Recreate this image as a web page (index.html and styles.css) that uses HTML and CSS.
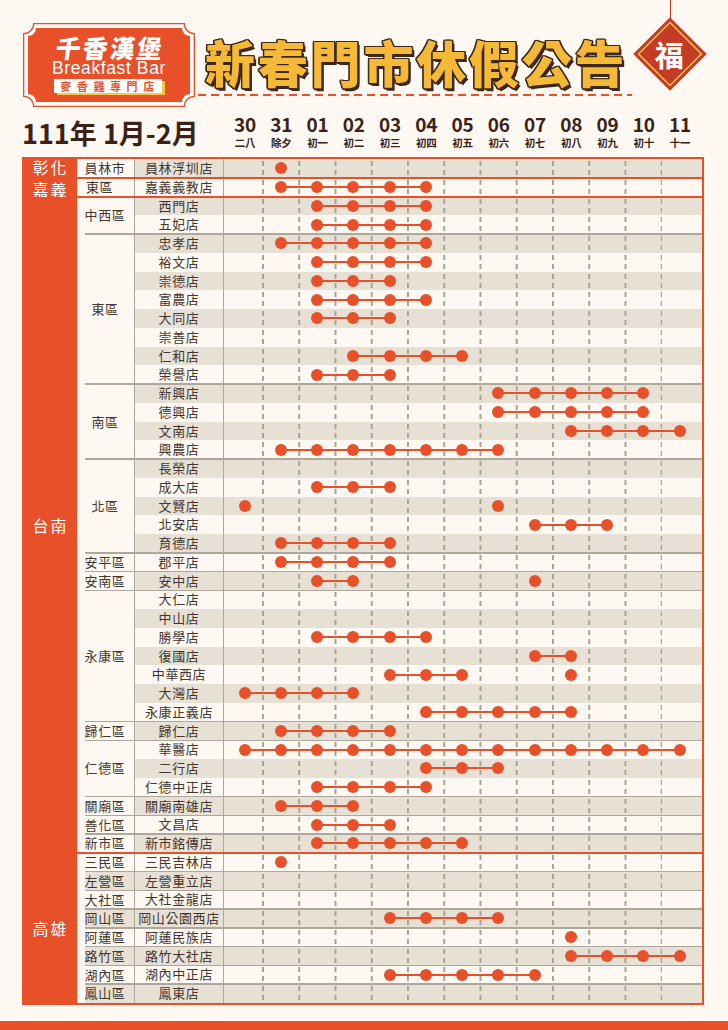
FILE: index.html
```html
<!DOCTYPE html>
<html lang="zh-Hant">
<head>
<meta charset="utf-8">
<title>千香漢堡 新春門市休假公告</title>
<link rel="stylesheet" href="styles.css">
</head>
<body>
<div class="page">
  <div class="fu-string"></div>
  <div class="fu"><span>福</span></div>

  <header class="header">
    <div class="logo">
      <svg class="logo-bg" viewBox="0 0 172 84" width="172" height="84" aria-hidden="true">
        <path d="M10.65,0.65 H161.35 A10 10 0 0 0 171.35,10.65 V73.35 A10 10 0 0 0 161.35,83.35 H10.65 A10 10 0 0 0 0.65,73.35 V10.65 A10 10 0 0 0 10.65,0.65 Z" fill="#fffaf4" stroke="#e8502a" stroke-width="1.3"/>
        <path d="M13,5 H159 A8 8 0 0 0 167,13 V71 A8 8 0 0 0 159,79 H13 A8 8 0 0 0 5,71 V13 A8 8 0 0 0 13,5 Z" fill="#e8502a"/>
      </svg>
      <div class="logo-cn">千香漢堡</div>
      <div class="logo-en">Breakfast Bar</div>
      <div class="logo-bar">麥香雞專門店</div>
    </div>
    <div class="title-wrap">
      <h1 class="title">新春門市休假公告</h1>
      <div class="title-dash"></div>
    </div>
  </header>

  <div class="dhead">
    <div class="period">111年 1月-2月</div>
    <div class="dcol"><b>30</b><small>二八</small></div>
    <div class="dcol"><b>31</b><small>除夕</small></div>
    <div class="dcol"><b>01</b><small>初一</small></div>
    <div class="dcol"><b>02</b><small>初二</small></div>
    <div class="dcol"><b>03</b><small>初三</small></div>
    <div class="dcol"><b>04</b><small>初四</small></div>
    <div class="dcol"><b>05</b><small>初五</small></div>
    <div class="dcol"><b>06</b><small>初六</small></div>
    <div class="dcol"><b>07</b><small>初七</small></div>
    <div class="dcol"><b>08</b><small>初八</small></div>
    <div class="dcol"><b>09</b><small>初九</small></div>
    <div class="dcol"><b>10</b><small>初十</small></div>
    <div class="dcol"><b>11</b><small>十一</small></div>
  </div>

  <div class="table">
    <!-- 彰化 嘉義 -->
    <section class="region">
      <div class="rlabel"><span class="two">彰化<br>嘉義</span></div>
      <div class="districts">
        <div class="dgroup">
          <div class="dlabel">員林市</div>
          <div class="rows">
            <div class="row b"><div class="store">員林浮圳店</div><div class="dates"><i class="d c2"></i></div></div>
          </div>
        </div>
        <div class="dgroup red">
          <div class="dlabel left">東區</div>
          <div class="rows">
            <div class="row"><div class="store">嘉義義教店</div><div class="dates"><i class="seg" style="grid-column:2/7"></i><i class="d c2"></i><i class="d c3"></i><i class="d c4"></i><i class="d c5"></i><i class="d c6"></i></div></div>
          </div>
        </div>
      </div>
    </section>

    <!-- 台南 -->
    <section class="region red-top">
      <div class="rlabel"><span>台南</span></div>
      <div class="districts">
        <div class="dgroup">
          <div class="dlabel">中西區</div>
          <div class="rows">
            <div class="row b"><div class="store">西門店</div><div class="dates"><i class="seg" style="grid-column:3/7"></i><i class="d c3"></i><i class="d c4"></i><i class="d c5"></i><i class="d c6"></i></div></div>
            <div class="row"><div class="store">五妃店</div><div class="dates"><i class="seg" style="grid-column:3/7"></i><i class="d c3"></i><i class="d c4"></i><i class="d c5"></i><i class="d c6"></i></div></div>
          </div>
        </div>
        <div class="dgroup sep">
          <div class="dlabel">東區</div>
          <div class="rows">
            <div class="row b"><div class="store">忠孝店</div><div class="dates"><i class="seg" style="grid-column:2/7"></i><i class="d c2"></i><i class="d c3"></i><i class="d c4"></i><i class="d c5"></i><i class="d c6"></i></div></div>
            <div class="row"><div class="store">裕文店</div><div class="dates"><i class="seg" style="grid-column:3/7"></i><i class="d c3"></i><i class="d c4"></i><i class="d c5"></i><i class="d c6"></i></div></div>
            <div class="row b"><div class="store">崇德店</div><div class="dates"><i class="seg" style="grid-column:3/6"></i><i class="d c3"></i><i class="d c4"></i><i class="d c5"></i></div></div>
            <div class="row"><div class="store">富農店</div><div class="dates"><i class="seg" style="grid-column:3/7"></i><i class="d c3"></i><i class="d c4"></i><i class="d c5"></i><i class="d c6"></i></div></div>
            <div class="row b"><div class="store">大同店</div><div class="dates"><i class="seg" style="grid-column:3/6"></i><i class="d c3"></i><i class="d c4"></i><i class="d c5"></i></div></div>
            <div class="row"><div class="store">崇善店</div><div class="dates"></div></div>
            <div class="row b"><div class="store">仁和店</div><div class="dates"><i class="seg" style="grid-column:4/8"></i><i class="d c4"></i><i class="d c5"></i><i class="d c6"></i><i class="d c7"></i></div></div>
            <div class="row"><div class="store">榮譽店</div><div class="dates"><i class="seg" style="grid-column:3/6"></i><i class="d c3"></i><i class="d c4"></i><i class="d c5"></i></div></div>
          </div>
        </div>
        <div class="dgroup sep">
          <div class="dlabel">南區</div>
          <div class="rows">
            <div class="row b"><div class="store">新興店</div><div class="dates"><i class="seg" style="grid-column:8/13"></i><i class="d c8"></i><i class="d c9"></i><i class="d c10"></i><i class="d c11"></i><i class="d c12"></i></div></div>
            <div class="row"><div class="store">德興店</div><div class="dates"><i class="seg" style="grid-column:8/13"></i><i class="d c8"></i><i class="d c9"></i><i class="d c10"></i><i class="d c11"></i><i class="d c12"></i></div></div>
            <div class="row b"><div class="store">文南店</div><div class="dates"><i class="seg" style="grid-column:10/14"></i><i class="d c10"></i><i class="d c11"></i><i class="d c12"></i><i class="d c13"></i></div></div>
            <div class="row"><div class="store">興農店</div><div class="dates"><i class="seg" style="grid-column:2/9"></i><i class="d c2"></i><i class="d c3"></i><i class="d c4"></i><i class="d c5"></i><i class="d c6"></i><i class="d c7"></i><i class="d c8"></i></div></div>
          </div>
        </div>
        <div class="dgroup sep">
          <div class="dlabel">北區</div>
          <div class="rows">
            <div class="row b"><div class="store">長榮店</div><div class="dates"></div></div>
            <div class="row"><div class="store">成大店</div><div class="dates"><i class="seg" style="grid-column:3/6"></i><i class="d c3"></i><i class="d c4"></i><i class="d c5"></i></div></div>
            <div class="row b"><div class="store">文賢店</div><div class="dates"><i class="d c1"></i><i class="d c8"></i></div></div>
            <div class="row"><div class="store">北安店</div><div class="dates"><i class="seg" style="grid-column:9/12"></i><i class="d c9"></i><i class="d c10"></i><i class="d c11"></i></div></div>
            <div class="row b"><div class="store">育德店</div><div class="dates"><i class="seg" style="grid-column:2/6"></i><i class="d c2"></i><i class="d c3"></i><i class="d c4"></i><i class="d c5"></i></div></div>
          </div>
        </div>
        <div class="dgroup sep">
          <div class="dlabel">安平區</div>
          <div class="rows">
            <div class="row"><div class="store">郡平店</div><div class="dates"><i class="seg" style="grid-column:2/6"></i><i class="d c2"></i><i class="d c3"></i><i class="d c4"></i><i class="d c5"></i></div></div>
          </div>
        </div>
        <div class="dgroup sep">
          <div class="dlabel">安南區</div>
          <div class="rows">
            <div class="row b"><div class="store">安中店</div><div class="dates"><i class="seg" style="grid-column:3/5"></i><i class="d c3"></i><i class="d c4"></i><i class="d c9"></i></div></div>
          </div>
        </div>
        <div class="dgroup sep">
          <div class="dlabel">永康區</div>
          <div class="rows">
            <div class="row"><div class="store">大仁店</div><div class="dates"></div></div>
            <div class="row b"><div class="store">中山店</div><div class="dates"></div></div>
            <div class="row"><div class="store">勝學店</div><div class="dates"><i class="seg" style="grid-column:3/7"></i><i class="d c3"></i><i class="d c4"></i><i class="d c5"></i><i class="d c6"></i></div></div>
            <div class="row b"><div class="store">復國店</div><div class="dates"><i class="seg" style="grid-column:9/11"></i><i class="d c9"></i><i class="d c10"></i></div></div>
            <div class="row"><div class="store">中華西店</div><div class="dates"><i class="seg" style="grid-column:5/8"></i><i class="d c5"></i><i class="d c6"></i><i class="d c7"></i><i class="d c10"></i></div></div>
            <div class="row b"><div class="store">大灣店</div><div class="dates"><i class="seg" style="grid-column:1/5"></i><i class="d c1"></i><i class="d c2"></i><i class="d c3"></i><i class="d c4"></i></div></div>
            <div class="row"><div class="store">永康正義店</div><div class="dates"><i class="seg" style="grid-column:6/11"></i><i class="d c6"></i><i class="d c7"></i><i class="d c8"></i><i class="d c9"></i><i class="d c10"></i></div></div>
          </div>
        </div>
        <div class="dgroup sep">
          <div class="dlabel">歸仁區</div>
          <div class="rows">
            <div class="row b"><div class="store">歸仁店</div><div class="dates"><i class="seg" style="grid-column:2/6"></i><i class="d c2"></i><i class="d c3"></i><i class="d c4"></i><i class="d c5"></i></div></div>
          </div>
        </div>
        <div class="dgroup sep">
          <div class="dlabel">仁德區</div>
          <div class="rows">
            <div class="row"><div class="store">華醫店</div><div class="dates"><i class="seg" style="grid-column:1/14"></i><i class="d c1"></i><i class="d c2"></i><i class="d c3"></i><i class="d c4"></i><i class="d c5"></i><i class="d c6"></i><i class="d c7"></i><i class="d c8"></i><i class="d c9"></i><i class="d c10"></i><i class="d c11"></i><i class="d c12"></i><i class="d c13"></i></div></div>
            <div class="row b"><div class="store">二行店</div><div class="dates"><i class="seg" style="grid-column:6/9"></i><i class="d c6"></i><i class="d c7"></i><i class="d c8"></i></div></div>
            <div class="row"><div class="store">仁德中正店</div><div class="dates"><i class="seg" style="grid-column:3/7"></i><i class="d c3"></i><i class="d c4"></i><i class="d c5"></i><i class="d c6"></i></div></div>
          </div>
        </div>
        <div class="dgroup sep">
          <div class="dlabel">關廟區</div>
          <div class="rows">
            <div class="row b"><div class="store">關廟南雄店</div><div class="dates"><i class="seg" style="grid-column:2/5"></i><i class="d c2"></i><i class="d c3"></i><i class="d c4"></i></div></div>
          </div>
        </div>
        <div class="dgroup sep">
          <div class="dlabel">善化區</div>
          <div class="rows">
            <div class="row"><div class="store">文昌店</div><div class="dates"><i class="seg" style="grid-column:3/6"></i><i class="d c3"></i><i class="d c4"></i><i class="d c5"></i></div></div>
          </div>
        </div>
        <div class="dgroup sep">
          <div class="dlabel">新市區</div>
          <div class="rows">
            <div class="row b"><div class="store">新市銘傳店</div><div class="dates"><i class="seg" style="grid-column:3/8"></i><i class="d c3"></i><i class="d c4"></i><i class="d c5"></i><i class="d c6"></i><i class="d c7"></i></div></div>
          </div>
        </div>
      </div>
    </section>

    <!-- 高雄 -->
    <section class="region red-top">
      <div class="rlabel"><span>高雄</span></div>
      <div class="districts">
        <div class="dgroup">
          <div class="dlabel">三民區</div>
          <div class="rows">
            <div class="row"><div class="store">三民吉林店</div><div class="dates"><i class="d c2"></i></div></div>
          </div>
        </div>
        <div class="dgroup sep">
          <div class="dlabel b">左營區</div>
          <div class="rows">
            <div class="row b"><div class="store">左營重立店</div><div class="dates"></div></div>
          </div>
        </div>
        <div class="dgroup sep">
          <div class="dlabel">大社區</div>
          <div class="rows">
            <div class="row"><div class="store">大社金龍店</div><div class="dates"></div></div>
          </div>
        </div>
        <div class="dgroup sep">
          <div class="dlabel b">岡山區</div>
          <div class="rows">
            <div class="row b"><div class="store">岡山公園西店</div><div class="dates"><i class="seg" style="grid-column:5/9"></i><i class="d c5"></i><i class="d c6"></i><i class="d c7"></i><i class="d c8"></i></div></div>
          </div>
        </div>
        <div class="dgroup sep">
          <div class="dlabel">阿蓮區</div>
          <div class="rows">
            <div class="row"><div class="store">阿蓮民族店</div><div class="dates"><i class="d c10"></i></div></div>
          </div>
        </div>
        <div class="dgroup sep">
          <div class="dlabel b">路竹區</div>
          <div class="rows">
            <div class="row b"><div class="store">路竹大社店</div><div class="dates"><i class="seg" style="grid-column:10/14"></i><i class="d c10"></i><i class="d c11"></i><i class="d c12"></i><i class="d c13"></i></div></div>
          </div>
        </div>
        <div class="dgroup sep">
          <div class="dlabel">湖內區</div>
          <div class="rows">
            <div class="row"><div class="store">湖內中正店</div><div class="dates"><i class="seg" style="grid-column:5/10"></i><i class="d c5"></i><i class="d c6"></i><i class="d c7"></i><i class="d c8"></i><i class="d c9"></i></div></div>
          </div>
        </div>
        <div class="dgroup sep">
          <div class="dlabel b">鳳山區</div>
          <div class="rows">
            <div class="row b"><div class="store">鳳東店</div><div class="dates"></div></div>
          </div>
        </div>
      </div>
    </section>
  </div>

  <div class="footer"></div>
</div>
</body>
</html>
```

FILE: styles.css
```css
:root {
  --red: #e8502a;
  --deep: #c43c26;
  --ink: #3b2219;
  --text: #44362f;
  --beige: #e7e0d4;
  --cream: #fdf8f1;
  --line: #b0a79c;
}

* { box-sizing: border-box; }

html, body {
  margin: 0;
  padding: 0;
  background: var(--cream);
}

body {
  font-family: "Noto Sans CJK TC", "Noto Sans", sans-serif;
  color: var(--text);
}

.page {
  position: relative;
  width: 728px;
  height: 1030px;
  overflow: hidden;
  background: var(--cream);
}

/* ---------- decorative 福 ---------- */
.fu-string {
  position: absolute;
  left: 669.5px;
  top: 0;
  width: 1.5px;
  height: 22px;
  background: var(--deep);
}

.fu {
  position: absolute;
  left: 644px;
  top: 28px;
  width: 52px;
  height: 52px;
  background: var(--deep);
  box-shadow: inset 0 0 0 3px var(--deep), inset 0 0 0 4.5px #f3c24f;
  transform: rotate(45deg);
  display: flex;
  align-items: center;
  justify-content: center;
}

.fu span {
  transform: rotate(-45deg);
  color: #fff;
  font-size: 29px;
  font-weight: 700;
  line-height: 1;
}

/* ---------- header ---------- */
.header {
  display: flex;
  align-items: flex-start;
  height: 107px;
  padding: 23px 0 0 23px;
}

.logo {
  position: relative;
  width: 172px;
  height: 84px;
  display: flex;
  flex-direction: column;
  align-items: center;
  padding-top: 11px;
}

.logo-bg {
  position: absolute;
  left: 0;
  top: 0;
}

.logo-cn,
.logo-en,
.logo-bar {
  position: relative;
}

.logo-cn {
  color: #fff;
  font-size: 25px;
  font-weight: 900;
  line-height: 26px;
  letter-spacing: 2px;
  margin-left: 2px;
  transform: skewX(-8deg);
}

.logo-en {
  color: #fff;
  font-family: "Liberation Sans", Arial, sans-serif;
  font-size: 17.5px;
  line-height: 16px;
  letter-spacing: 0.6px;
}

.logo-bar {
  margin-top: 3px;
  margin-left: -3px;
  width: 108px;
  height: 14px;
  background: #fff;
  box-shadow: 3px 2px 0 #f4c744;
  color: var(--red);
  font-size: 11px;
  font-weight: 700;
  line-height: 14px;
  letter-spacing: 5.6px;
  text-align: center;
  padding-left: 5px;
  white-space: nowrap;
}

.title-wrap {
  margin-left: 3px;
  width: 434px;
}

.title {
  margin: 13px 0 0;
  padding-left: 7px;
  font-size: 50px;
  font-weight: 900;
  line-height: 50px;
  letter-spacing: 2.8px;
  color: #f4b936;
  white-space: nowrap;
  text-shadow:
    1.5px 0 0 #3f2718, -1.5px 0 0 #3f2718, 0 1.5px 0 #3f2718, 0 -1.5px 0 #3f2718,
    1.2px 1.2px 0 #3f2718, -1.2px 1.2px 0 #3f2718, 1.2px -1.2px 0 #3f2718, -1.2px -1.2px 0 #3f2718,
    2.5px 2.5px 0 #3f2718;
}

.title-dash {
  margin-top: 8px;
  height: 2px;
  background: repeating-linear-gradient(to right, var(--red) 0 8px, transparent 8px 13px);
}

/* ---------- date header ---------- */
.dhead {
  display: flex;
  height: 50px;
  margin-left: 22px;
  color: var(--ink);
}

.period {
  width: 205px;
  align-self: center;
  font-size: 27px;
  font-weight: 700;
  line-height: 32px;
  margin-top: 2px;
  white-space: nowrap;
}

.dcol {
  width: 36.25px;
  display: flex;
  flex-direction: column;
  align-items: center;
  padding-top: 6px;
}

.dcol b {
  font-size: 19px;
  font-weight: 700;
  line-height: 22px;
}

.dcol small {
  margin-top: 2px;
  font-size: 10.5px;
  font-weight: 700;
  line-height: 12px;
}

/* ---------- table ---------- */
.table {
  margin-left: 22px;
  width: 682px;
  border-top: 2px solid var(--red);
  border-right: 2px solid var(--red);
  border-bottom: 2px solid var(--red);
}

.region {
  position: relative;
  display: flex;
}

.region.red-top::after {
  content: "";
  position: absolute;
  left: 55px;
  right: 0;
  top: -1px;
  height: 2px;
  background: var(--red);
  z-index: 3;
}

.rlabel {
  width: 55px;
  flex: none;
  background: var(--red);
  color: #fff;
  display: flex;
  align-items: center;
  justify-content: center;
  text-align: center;
  font-size: 16px;
  line-height: 16px;
  letter-spacing: 2px;
  padding-left: 2px;
}

.rlabel .two {
  display: block;
  line-height: 22px;
  margin: -4px 0;
}

.districts {
  flex: 1;
  display: flex;
  flex-direction: column;
}

.dgroup {
  position: relative;
  display: flex;
  padding-left: 8px;
}

.dgroup.sep::after {
  content: "";
  position: absolute;
  left: 8px;
  right: 0;
  top: -0.75px;
  height: 1.5px;
  background: var(--line);
  z-index: 3;
}

.dgroup.red::after {
  content: "";
  position: absolute;
  left: 0;
  right: 0;
  top: -1px;
  height: 2px;
  background: var(--red);
  z-index: 3;
}

.dlabel {
  width: 49px;
  flex: none;
  display: flex;
  align-items: center;
  justify-content: center;
  padding-right: 9px;
  font-size: 13px;
  line-height: 14px;
  letter-spacing: 0.6px;
  white-space: nowrap;
}

.dlabel.left {
  justify-content: flex-start;
  padding-left: 1px;
}

.dlabel.b { background: var(--beige); }

.rows {
  flex: 1;
  display: flex;
  flex-direction: column;
}

.row {
  display: flex;
  height: 18.75px;
}

.row.b { background: var(--beige); }

.store {
  width: 89px;
  flex: none;
  border-left: 1.5px solid var(--line);
  text-align: center;
  font-size: 13px;
  line-height: 18.75px;
  letter-spacing: 0.6px;
  white-space: nowrap;
  overflow: hidden;
}

.dates {
  position: relative;
  flex: 1;
  border-left: 1.5px solid var(--line);
  padding-left: 2.5px;
  display: grid;
  grid-template-columns: repeat(13, 36.25px);
  grid-template-rows: 18.75px;
  align-items: center;
}

.dates::before {
  content: "";
  position: absolute;
  top: 0;
  bottom: 0;
  left: 38px;
  width: 400.25px;
  background: linear-gradient(to right, #aaa197 0 1.5px, transparent 1.5px) 0 0 / 36.25px 100% repeat-x;
  -webkit-mask-image: repeating-linear-gradient(to bottom, transparent 0 2px, #000 2px 7px, transparent 7px 9.375px);
  mask-image: repeating-linear-gradient(to bottom, transparent 0 2px, #000 2px 7px, transparent 7px 9.375px);
}

.dates > i {
  grid-row: 1;
  position: relative;
  z-index: 1;
}

.seg {
  height: 2px;
  margin: 0 18.125px;
  background: var(--red);
}

.dates > .d {
  justify-self: center;
  width: 12px;
  height: 12px;
  border-radius: 50%;
  background: var(--red);
  z-index: 2;
}

.c1 { grid-column: 1; }
.c2 { grid-column: 2; }
.c3 { grid-column: 3; }
.c4 { grid-column: 4; }
.c5 { grid-column: 5; }
.c6 { grid-column: 6; }
.c7 { grid-column: 7; }
.c8 { grid-column: 8; }
.c9 { grid-column: 9; }
.c10 { grid-column: 10; }
.c11 { grid-column: 11; }
.c12 { grid-column: 12; }
.c13 { grid-column: 13; }

/* ---------- footer band ---------- */
.footer {
  margin-top: 16px;
  height: 9px;
  background: var(--red);
}
```
